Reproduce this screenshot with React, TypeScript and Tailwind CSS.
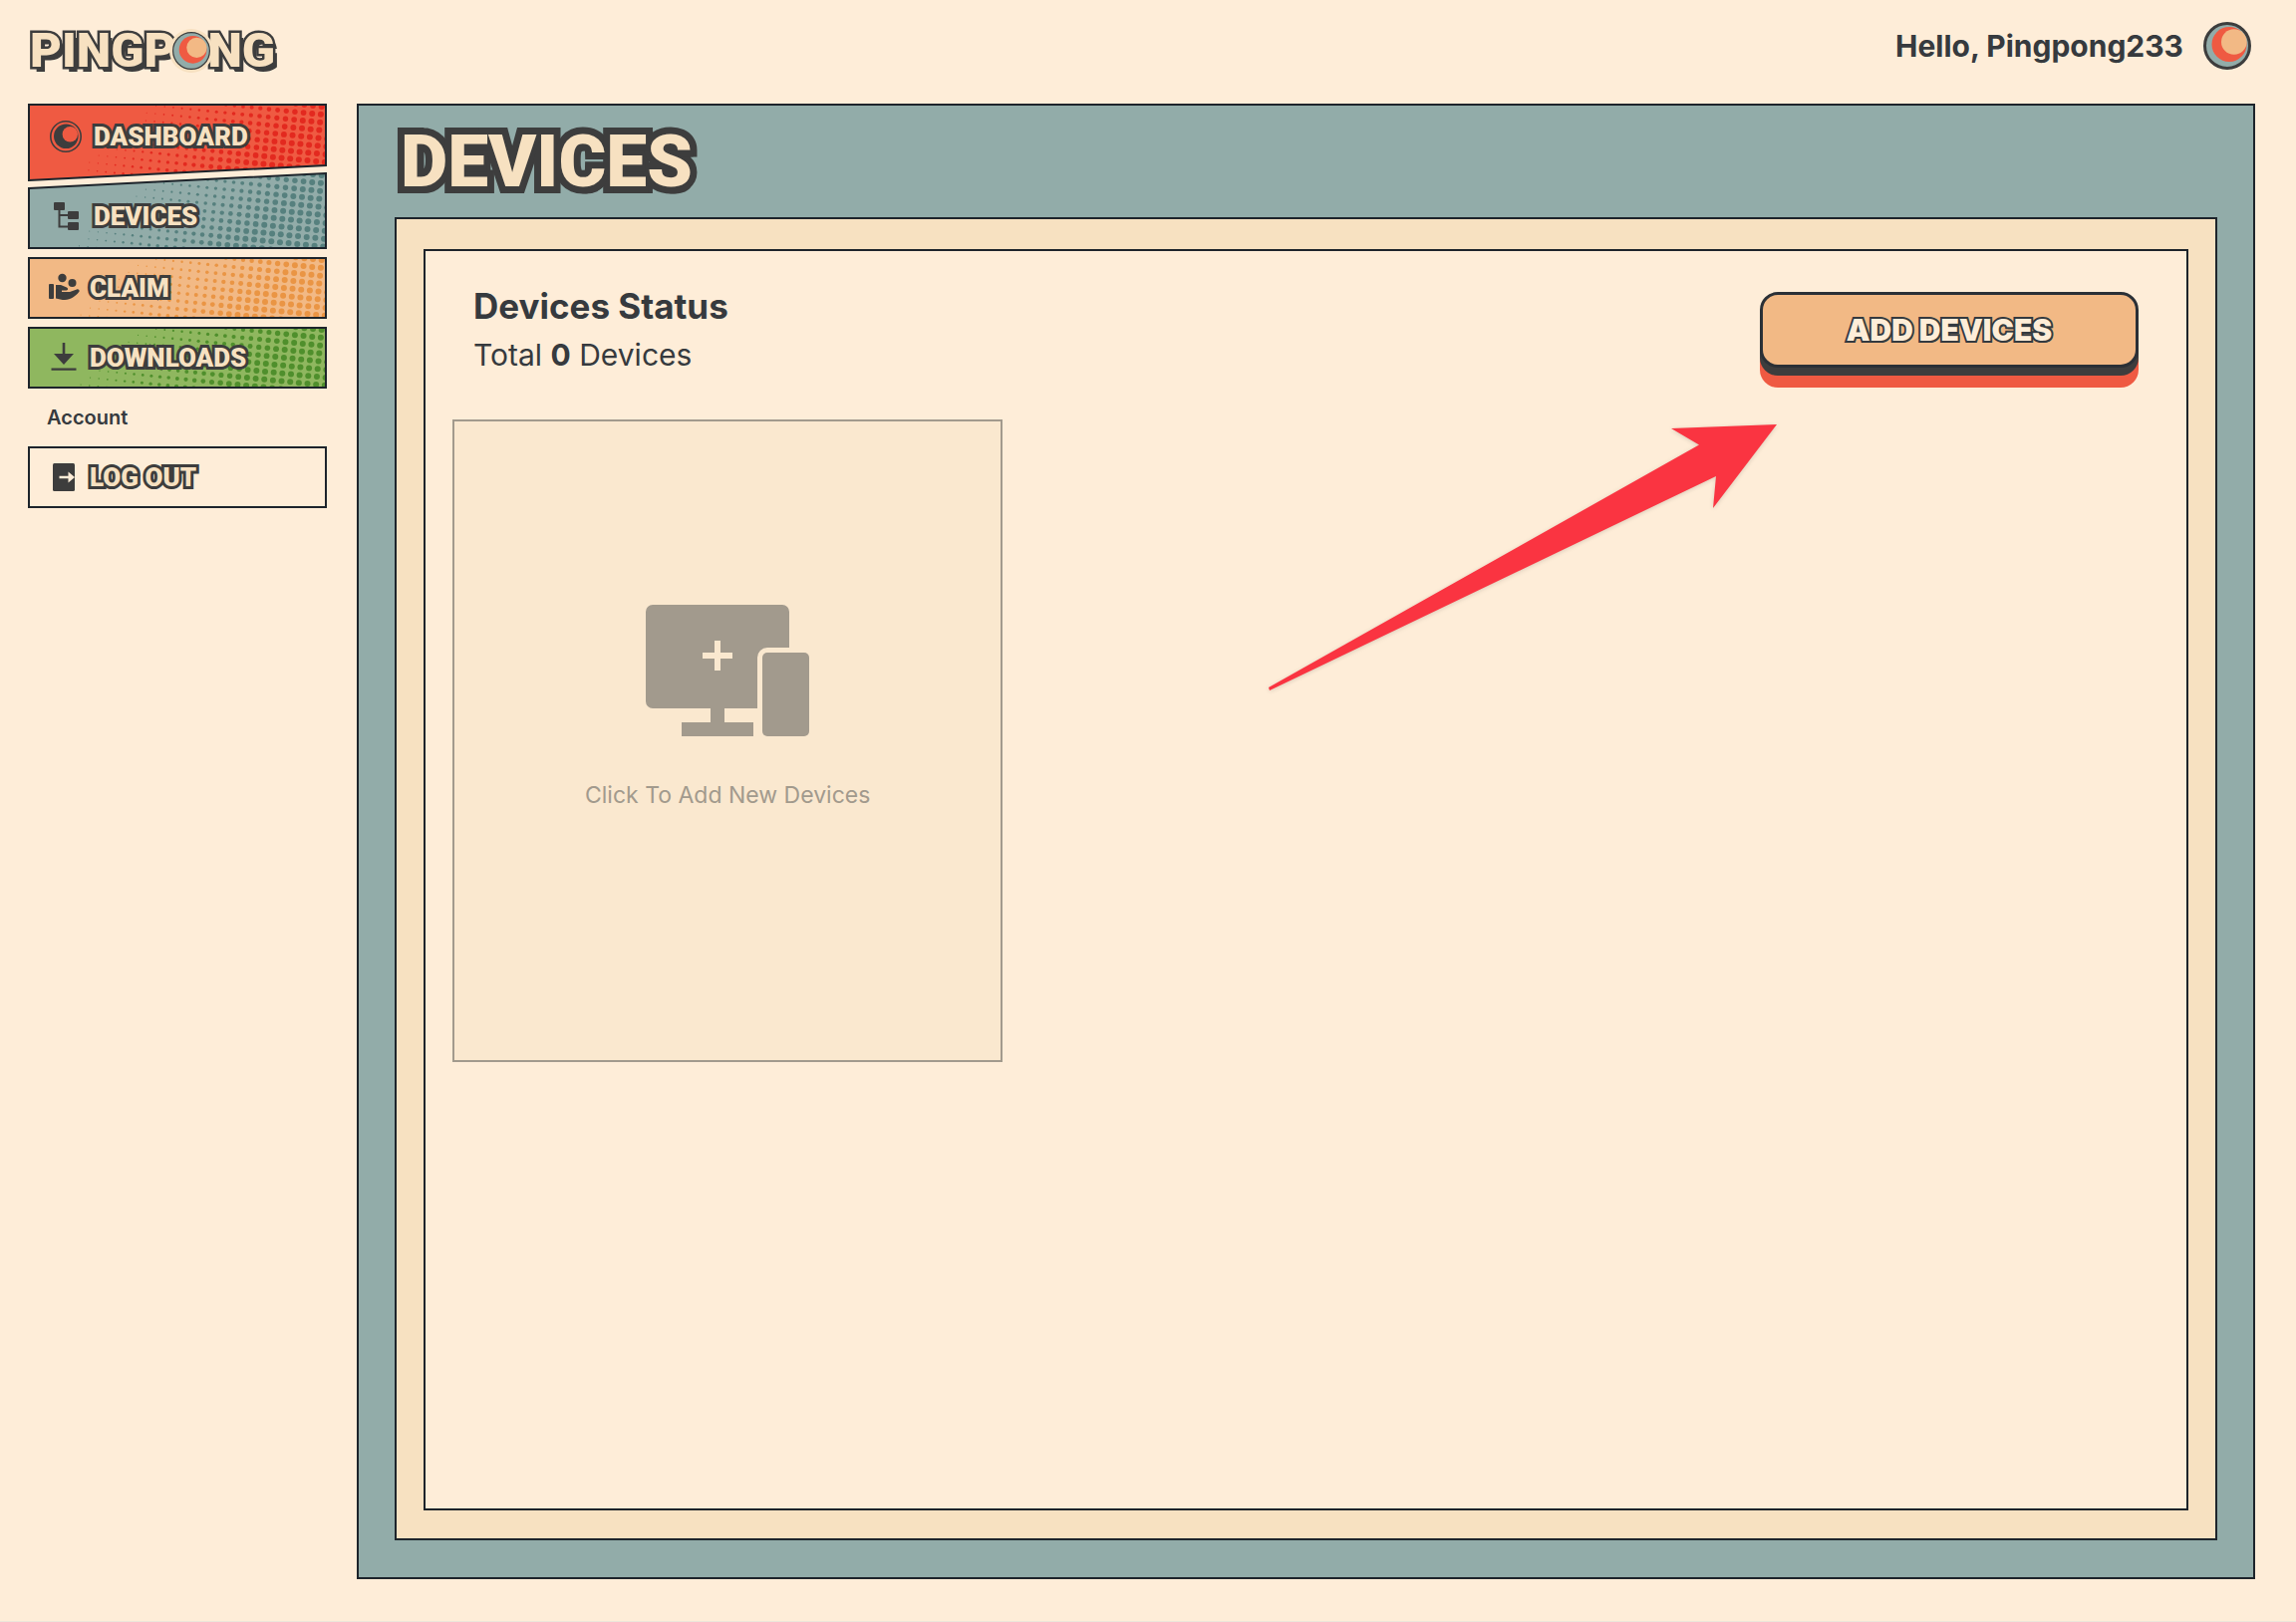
import React from 'react';

type Shape = 'slopeBottom' | 'slopeTop' | 'rect';

const shapes: Record<Shape, { height: number; points: string; fade: number }> = {
  slopeBottom: { height: 78, points: '1,1 299,1 299,62 1,77', fade: 136 },
  slopeTop: { height: 77, points: '1,16 299,1 299,76 1,76', fade: 136 },
  rect: { height: 62, points: '1,1 299,1 299,61 1,61', fade: 120 },
};

const comic =
  "font-['Roboto',sans-serif] font-black uppercase leading-none text-[#f7e1c1] [paint-order:stroke_fill] [-webkit-text-stroke-color:#3d3d3d]";

const halftone = (height: number, fade: number) => {
  const dots: { x: number; y: number; r: number }[] = [];
  const angle = 0.1;
  for (let row = -5; row < 12; row += 1) {
    for (let col = 0; col < 40; col += 1) {
      const u = col * 8.7;
      const v = row * 7.9;
      const x = u * Math.cos(angle) - v * Math.sin(angle) - 2;
      const y = u * Math.sin(angle) + v * Math.cos(angle) - 3;
      const r = Math.min(3, (x + y * 1.15 - fade) * 0.015 + 0.6);
      if (r > 0.5 && y > -3 && y < height + 3 && x < 302) {
        dots.push({ x, y, r });
      }
    }
  }
  return dots;
};

const MoonIcon = ({ fill }: { fill: string }) => (
  <svg viewBox="0 0 32 32" className="size-8 shrink-0" aria-hidden>
    <circle cx="16" cy="16" r="15.200" fill="none" stroke="#3d3d3d" strokeWidth="1.600" />
    <circle cx="16.300" cy="15.800" r="12.300" fill="#3d3d3d" />
    <circle cx="20.300" cy="13.800" r="7.700" fill={fill} />
  </svg>
);

const TreeIcon = () => (
  <svg viewBox="0 0 32 32" className="size-8 shrink-0" aria-hidden>
    <path d="M9.500 8v18.500H20M9.500 15H20" fill="none" stroke="#3d3d3d" strokeWidth="2" />
    <g fill="#3d3d3d">
      <rect x="4" y="2" width="11" height="8" rx="1" />
      <rect x="18" y="11" width="11" height="8" rx="1" />
      <rect x="18" y="22" width="11" height="8" rx="1" />
    </g>
  </svg>
);

const ClaimIcon = () => (
  <svg viewBox="0 0 32 32" className="size-8 shrink-0" aria-hidden>
    <g fill="#3d3d3d">
      <circle cx="14.500" cy="6" r="4.200" />
      <circle cx="24.500" cy="11" r="4" />
      <rect x="1" y="12" width="5" height="15" rx="1" />
      <path d="M8 13h5l6 2.500c1.600.7 1.500 3-.5 3H14v1.500h8l7-2.500c2-.7 3.500 1.300 2 2.800C28 24 23 28 17 28c-3 0-6-.6-9-1.500z" />
    </g>
  </svg>
);

const DownloadIcon = () => (
  <svg viewBox="0 0 32 32" className="size-8 shrink-0" aria-hidden>
    <path d="M14.700 1h2.600v11H26L16 23 6 12h8.700zM3.500 26.500h25v2.300h-25z" fill="#3d3d3d" />
  </svg>
);

const LogoutIcon = () => (
  <svg viewBox="0 0 32 32" className="size-8 shrink-0" aria-hidden>
    <rect x="5" y="2" width="22" height="28" rx="1.500" fill="#3d3d3d" />
    <path d="M11.500 14.800h9v-4.300l6.500 5.500-6.500 5.500v-4.300h-9z" fill="#feedd8" />
  </svg>
);

const BallLogo = ({ className }: { className: string }) => (
  <svg viewBox="0 0 48 48" className={className} aria-hidden>
    <circle cx="24" cy="24" r="22.500" fill="#92aca9" stroke="#3d3d3d" strokeWidth="3" />
    <circle cx="26" cy="22.500" r="17.500" fill="#ef5a42" />
    <circle cx="30.800" cy="20" r="12.800" fill="#f2b985" />
  </svg>
);

const NavItem = ({
  label,
  icon,
  shape,
  fill,
  dots,
  className,
}: {
  label: string;
  icon: React.ReactNode;
  shape: Shape;
  fill: string;
  dots?: string;
  className: string;
}) => {
  const { height, points, fade } = shapes[shape];
  const clipId = `clip-${label.replace(' ', '-')}`;
  return (
    <a href="#" className={`relative flex items-center ${className}`}>
      <svg
        viewBox={`0 0 300 ${height}`}
        preserveAspectRatio="none"
        className="absolute inset-0 size-full"
        aria-hidden
      >
        <clipPath id={clipId}>
          <polygon points={points} />
        </clipPath>
        <polygon points={points} fill={fill} />
        {dots && (
          <g clipPath={`url(#${clipId})`} fill={dots}>
            {halftone(height, fade).map(({ x, y, r }) => (
              <circle key={`${x}-${y}`} cx={x} cy={y} r={r} />
            ))}
          </g>
        )}
        <polygon points={points} fill="none" stroke="#1d242b" strokeWidth="2" />
      </svg>
      <span className="relative">{icon}</span>
      <span
        className={`relative text-[26px] [-webkit-text-stroke-width:6px] [text-shadow:1px_2px_0_#3d3d3d] ${comic}`}
      >
        {label}
      </span>
    </a>
  );
};

const Sidebar = () => (
  <nav className="flex w-[300px] shrink-0 flex-col">
    <NavItem
      label="Dashboard"
      icon={<MoonIcon fill="#ef5a42" />}
      shape="slopeBottom"
      fill="#ef5a42"
      dots="#e3291f"
      className="h-[78px] gap-3 pb-3 pl-[22px]"
    />
    <NavItem
      label="Devices"
      icon={<TreeIcon />}
      shape="slopeTop"
      fill="#92aca9"
      dots="#56807e"
      className="-mt-[9px] h-[77px] gap-3 pt-2.5 pl-[22px]"
    />
    <NavItem
      label="Claim"
      icon={<ClaimIcon />}
      shape="rect"
      fill="#f2b985"
      dots="#ea9544"
      className="mt-2 h-[62px] gap-2.5 pl-5"
    />
    <NavItem
      label="Downloads"
      icon={<DownloadIcon />}
      shape="rect"
      fill="#8fb75f"
      dots="#4f8f2c"
      className="mt-2 h-[62px] gap-2.5 pl-5"
    />
    <h2 className="py-4 pl-[19px] text-[20px] leading-[26px] font-semibold">Account</h2>
    <NavItem
      label="Log Out"
      icon={<LogoutIcon />}
      shape="rect"
      fill="#feedd8"
      className="h-[62px] gap-2.5 pl-5"
    />
  </nav>
);

const Header = () => (
  <header className="flex h-[104px] items-start justify-between pr-1">
    <a
      href="#"
      aria-label="Pingpong"
      className={`flex items-center pt-[26px] pl-0.5 text-[49px] [-webkit-text-stroke-width:5px] [text-shadow:4px_5px_0_#3d3d3d] ${comic}`}
    >
      <span>Pingp</span>
      <span className="relative z-10 -mx-1.5 rounded-full bg-[#f7e1c1] p-[3px]">
        <BallLogo className="size-[38px]" />
      </span>
      <span>ng</span>
    </a>
    <div className="flex items-center gap-5 pt-[22px]">
      <span className="text-[30px] leading-9 font-bold">Hello, Pingpong233</span>
      <BallLogo className="size-12" />
    </div>
  </header>
);

const AddDeviceCard = () => (
  <button
    type="button"
    className="flex h-[645px] flex-col items-center border-2 border-[#a29a8d] bg-[#fae8cf] pt-[184px] text-[#a29a8d]"
  >
    <svg viewBox="0 0 164 132" className="h-[132px] w-[164px]" aria-hidden>
      <g fill="#a29a8d">
        <path d="M7 0h130a7 7 0 0 1 7 7v36h-22a10 10 0 0 0-10 10v51H79v14h29v14H36v-14h29v-14H7a7 7 0 0 1-7-7V7a7 7 0 0 1 7-7z" />
        <rect x="117" y="48" width="47" height="84" rx="5" />
      </g>
      <path d="M69 36h6v12h12v6H75v12h-6V54H57v-6h12z" fill="#fae8cf" />
    </svg>
    <span className="mt-[41px] text-[23px] leading-9">Click To Add New Devices</span>
  </button>
);

const PointerArrow = () => (
  <svg
    viewBox="0 0 511 268"
    className="pointer-events-none absolute top-[174px] right-[411px] w-[511px] drop-shadow-sm"
    aria-hidden
  >
    <path d="M1 264 433 20.500 405 4 511 0 447 84 450 52 2 267z" fill="#fa3441" />
  </svg>
);

const DevicesPanel = () => (
  <main className="flex flex-1 flex-col border-2 border-[#1d242b] bg-[#92aca9] px-9 pb-[37px]">
    <h1
      className={`flex h-[112px] items-center pl-1.5 text-[73px] [-webkit-text-stroke-width:14px] [text-shadow:3px_7px_0_#3d3d3d] ${comic}`}
    >
      Devices
    </h1>
    <div className="flex flex-1 flex-col border-2 border-[#1d242b] bg-[#f7e1c1] px-[27px] pt-[30px] pb-7">
      <section className="relative flex flex-1 flex-col border-2 border-[#1d242b] bg-[#feedd8]">
        <div className="flex items-start justify-between px-12 pt-[41px]">
          <div>
            <h2 className="text-[35px] leading-[28px] font-bold">Devices Status</h2>
            <p className="mt-3 text-[30px] leading-[46px]">
              Total <b>0</b> Devices
            </p>
          </div>
          <button
            type="button"
            className="h-[76px] w-[380px] rounded-[18px] border-3 border-[#2b3036] bg-[#f2b985] text-[30px] font-black text-[#feedd8] shadow-[0_8px_0_#3d3d3d,0_20px_0_#ef5a42] [-webkit-text-stroke:4px_#343a40] [paint-order:stroke_fill] [text-shadow:1px_2px_0_#343a40]"
          >
            ADD DEVICES
          </button>
        </div>
        <div className="mt-[42px] grid grid-cols-3 gap-7 px-[27px]">
          <AddDeviceCard />
        </div>
        <PointerArrow />
      </section>
    </div>
  </main>
);

const App = () => (
  <div className="flex min-h-screen flex-col border-b border-[#ece6da] bg-[#feedd8] pr-[41px] pb-[42px] pl-7 font-['Inter',sans-serif] text-[#363a3e]">
    <Header />
    <div className="flex flex-1 gap-[30px]">
      <Sidebar />
      <DevicesPanel />
    </div>
  </div>
);

export default App;
